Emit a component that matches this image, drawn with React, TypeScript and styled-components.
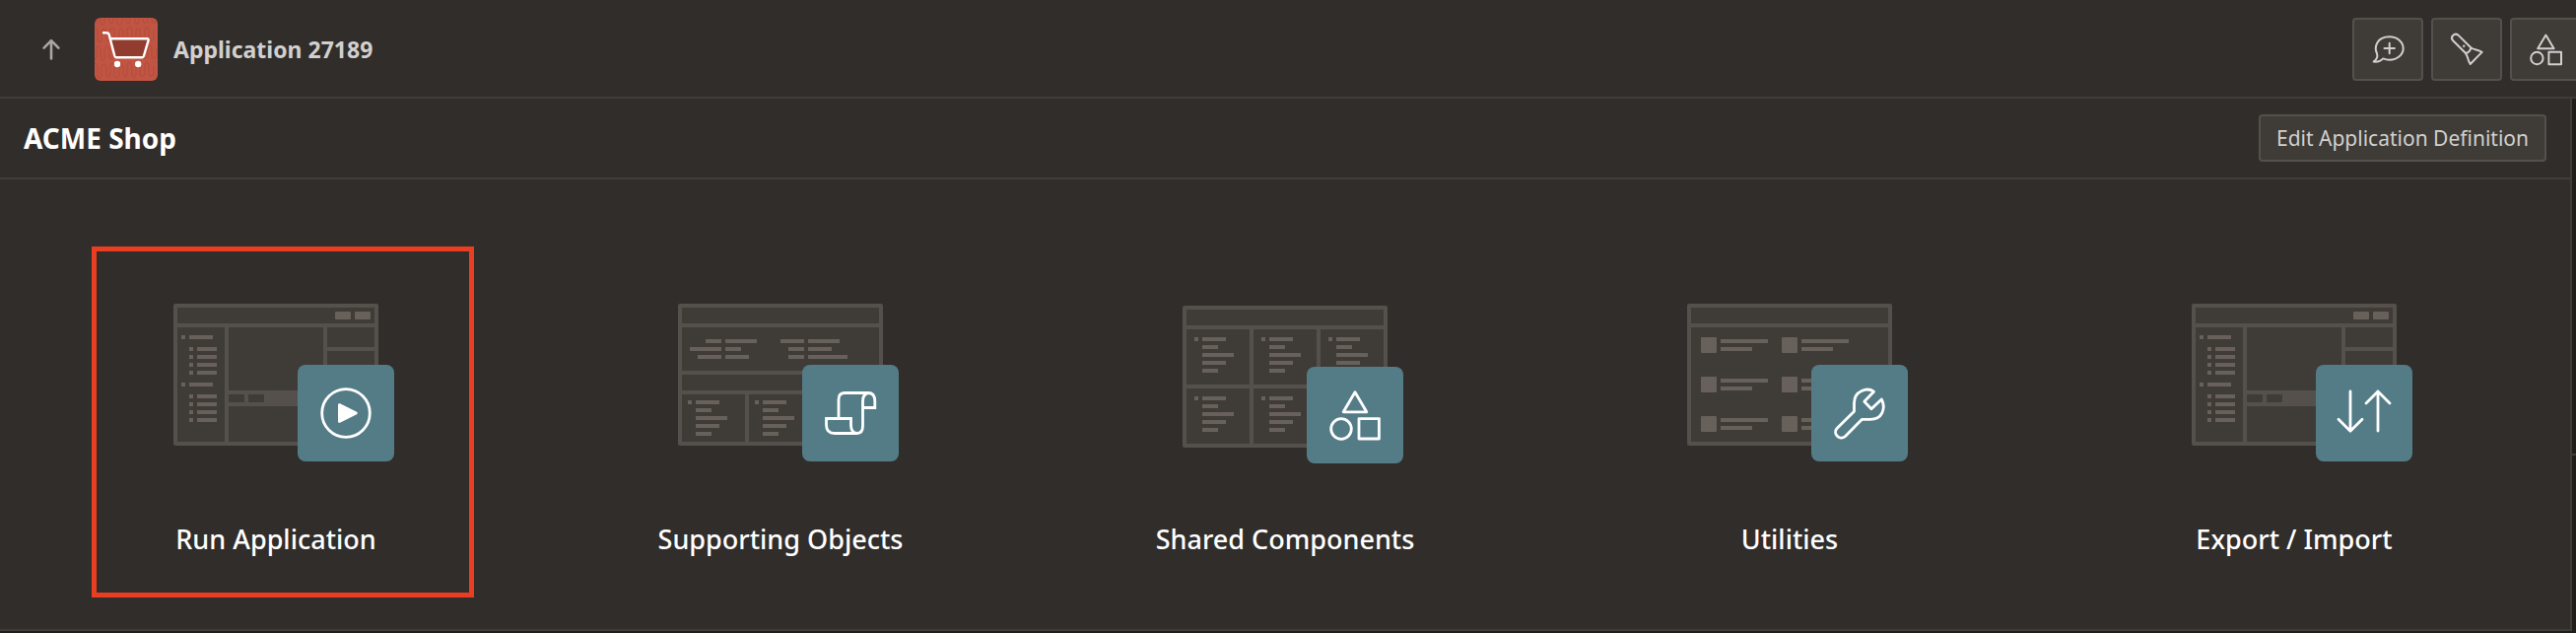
import React from 'react';
import styled, { createGlobalStyle } from 'styled-components';

const color = {
  surface: '#312d2a',
  backdrop: '#201e1c',
  divider: '#403c38',
  control: '#3f3b37',
  controlBorder: '#55504b',
  bar: '#67605b',
  text: '#d1d0ce',
  teal: '#547c87',
};

const GlobalStyle = createGlobalStyle`
  *, *::before, *::after { box-sizing: border-box; }
  body {
    margin: 0;
    background: ${color.backdrop};
    color: #fff;
    font-family: "Noto Sans", "Open Sans", sans-serif;
  }
`;

const Page = styled.div`
  min-height: 100vh;
  overflow: hidden;
`;

const Header = styled.header`
  display: flex;
  align-items: center;
  padding: 16px 0 16px 40px;
  border-top: 2px solid ${color.surface};
  border-bottom: 2px solid ${color.divider};
  background: ${color.surface};
`;

const UpLink = styled.a`
  display: block;
  width: 24px;
  height: 24px;
  margin-right: 32px;
  color: #a9a7a4;
`;

const AppName = styled.span`
  margin-left: 16px;
  color: ${color.text};
  font-size: 23px;
  font-weight: 700;
  line-height: 32px;
`;

const Toolbar = styled.nav`
  display: flex;
  gap: 8px;
  margin-left: auto;
  margin-right: -5px;
`;

const ToolButton = styled.button`
  display: flex;
  align-items: center;
  justify-content: center;
  width: 72px;
  height: 64px;
  padding: 0;
  border: 2px solid ${color.controlBorder};
  border-radius: 4px;
  background: ${color.control};
  color: ${color.text};
`;

const Workspace = styled.div`
  display: grid;
  grid-template-columns: 1fr 4px;
`;

const Main = styled.main`
  border-right: 2px solid ${color.divider};
  border-bottom: 2px solid ${color.divider};
  background: ${color.surface};
`;

const SidePanel = styled.aside`
  background: ${color.backdrop};
`;

const SideSection = styled.div`
  height: 362px;
  border-bottom: 2px solid ${color.divider};
`;

const TitleBar = styled.div`
  display: flex;
  align-items: center;
  justify-content: space-between;
  padding: 16px 24px;
  border-bottom: 2px solid ${color.divider};
`;

const Title = styled.h1`
  margin: 0;
  font-size: 28px;
  font-weight: 700;
  line-height: 40px;
`;

const EditButton = styled.button`
  height: 48px;
  padding: 0 16px;
  border: 2px solid ${color.controlBorder};
  border-radius: 4px;
  background: ${color.control};
  color: ${color.text};
  font-family: inherit;
  font-size: 21px;
  line-height: 32px;
`;

const CardList = styled.ul`
  display: grid;
  grid-template-columns: repeat(5, 1fr);
  margin: 0;
  padding: 64px 24px 32px;
  list-style: none;
`;

const CardItem = styled.li`
  position: relative;
`;

const CardLink = styled.a`
  display: flex;
  flex-direction: column;
  align-items: center;
  gap: 45px;
  padding: 46px 0 41px;
  color: #fff;
  text-decoration: none;
`;

const CardLabel = styled.span`
  font-size: 27px;
  font-weight: 500;
  line-height: 36px;
`;

const Highlight = styled.div`
  position: absolute;
  top: 4px;
  bottom: 0;
  left: 69px;
  width: 388px;
  border: 5px solid #ea3e23;
  pointer-events: none;
`;

const Glyph = styled.svg`
  display: block;
  overflow: visible;
  fill: none;
  stroke: currentColor;
  stroke-width: 2;
  stroke-linecap: round;
  stroke-linejoin: round;
`;

const AppIconSvg = styled.svg`
  display: block;
  border-radius: 6px;
`;

type RectSpec = [x: number, y: number, width: number, height: number];

const Rects = ({ items, fill, rx = 0 }: { items: RectSpec[]; fill: string; rx?: number }) => (
  <g fill={fill}>
    {items.map(([x, y, w, h]) => (
      <rect key={`${x}-${y}`} x={x} y={y} width={w} height={h} rx={rx} />
    ))}
  </g>
);

const textBlock = (x: number, y: number): RectSpec[] => [
  [x, y, 4, 4],
  ...[24, 16, 32, 24, 16].map((w, i): RectSpec => [x + 8, y + i * 8, w, 4]),
];

const treeBlock = (y: number): RectSpec[] => [
  [8, y, 4, 4],
  [16, y, 24, 4],
  ...[12, 20, 28, 36].flatMap((d): RectSpec[] => [
    [16, y + d, 4, 4],
    [24, y + d, 20, 4],
  ]),
];

const BuilderWireframe = () => (
  <>
    <Rects
      fill={color.controlBorder}
      items={[[52, 24, 4, 116], [152, 24, 4, 116], [156, 44, 48, 4], [56, 88, 96, 16]]}
    />
    <Rects fill={color.control} rx={1} items={[[56, 92, 16, 8], [76, 92, 16, 8]]} />
    <Rects fill={color.bar} rx={1} items={[[164, 8, 16, 8], [184, 8, 16, 8]]} />
    <Rects fill={color.bar} items={[...treeBlock(32), ...treeBlock(80)]} />
  </>
);

const ObjectsWireframe = () => (
  <>
    <Rects
      fill={color.controlBorder}
      items={[[4, 68, 200, 4], [4, 88, 200, 4], [68, 92, 4, 48], [136, 92, 4, 48]]}
    />
    <Rects
      fill={color.bar}
      items={[
        [28, 36, 16, 4], [48, 36, 32, 4], [104, 36, 24, 4], [132, 36, 32, 4],
        [12, 44, 32, 4], [48, 44, 16, 4], [112, 44, 16, 4], [132, 44, 24, 4],
        [20, 52, 24, 4], [48, 52, 24, 4], [112, 52, 16, 4], [132, 52, 40, 4],
        ...textBlock(10, 98), ...textBlock(78, 98),
      ]}
    />
  </>
);

const ComponentsWireframe = () => (
  <>
    <Rects
      fill={color.controlBorder}
      items={[[68, 24, 4, 116], [136, 24, 4, 116], [4, 80, 200, 4]]}
    />
    <Rects
      fill={color.bar}
      items={[32, 92].flatMap((y) => [12, 80, 148].flatMap((x) => textBlock(x, y)))}
    />
  </>
);

const UtilitiesWireframe = () => {
  const cells = [34, 74, 114].flatMap((y) => [14, 96].map((x) => [x, y]));
  return (
    <>
      <Rects fill={color.bar} rx={1} items={cells.map(([x, y]): RectSpec => [x, y, 16, 16])} />
      <Rects
        fill={color.bar}
        items={cells.flatMap(([x, y]): RectSpec[] => [
          [x + 20, y + 2, 48, 4],
          [x + 20, y + 10, 32, 4],
        ])}
      />
    </>
  );
};

const PlayMark = () => (
  <>
    <circle cx="49" cy="49" r="24.3" />
    <path d="M42.4 40.6 59.4 49 42.4 57.4Z" fill="#fff" />
  </>
);

const ScrollMark = () => (
  <path
    strokeLinecap="butt"
    strokeLinejoin="miter"
    d="M37 54V35Q37 28.5 43.5 28.5H67Q73.8 28.5 73.8 37V43.5H62M68 28.5Q61.5 29 61.5 37V62Q61.5 69.5 55.5 69.5Q49.5 69 49.5 61V54.5H24.5V61Q24.5 69.5 33 69.5H56"
  />
);

const ShapesMark = () => (
  <>
    <path d="M49 25.8 60.8 45.8H37.2Z" />
    <circle cx="35" cy="63" r="10.3" />
    <rect x="53" y="52.6" width="20.4" height="20.4" />
  </>
);

const WrenchMark = () => (
  <path d="M63.5 27.2C57 22.5 43.5 26 43.5 39V47.3L26 64.5C21.5 69.5 28.5 77.5 34.5 72.5L51.5 55.3H60C72 55.3 76 44 71.3 35L61 44.8 53.8 37.2Z" />
);

const TransferMark = () => (
  <path d="M35 27V67M23 55.3 35 67.3 47 55.3M63 67V27M51 39 63 27 75 39" />
);

interface IllustrationProps {
  wireframe: React.ReactNode;
  mark: React.ReactNode;
  top?: number;
}

const Illustration = ({ wireframe, mark, top = 16 }: IllustrationProps) => (
  <svg width="256" height="192" viewBox="0 0 256 192" aria-hidden="true">
    <g transform={`translate(24 ${top})`}>
      <rect width="208" height="144" rx="2" fill={color.controlBorder} />
      <rect x="4" y="4" width="200" height="136" fill={color.control} />
      <rect x="4" y="20" width="200" height="4" fill={color.controlBorder} />
      {wireframe}
      <g transform="translate(126 62)">
        <rect width="98" height="98" rx="8" fill={color.teal} />
        <g fill="none" stroke="#fff" strokeWidth="2.8" strokeLinecap="round" strokeLinejoin="round">
          {mark}
        </g>
      </g>
    </g>
  </svg>
);

const waveRows = [-6, 12, 30, 48];

const AppIcon = () => (
  <AppIconSvg width="64" height="64" viewBox="0 0 64 64" role="img" aria-label="Shop">
    <rect width="64" height="64" fill="#c15543" />
    <g fill="none" stroke="#b54d3c" strokeWidth="1.2">
      {waveRows.map((y, i) => (
        <path
          key={y}
          d={`M${-2 - (i % 2) * 3} ${y}v9q2 6 4 0v-8q2-5 4 0v10q2 5 4 0v-9q2-6 5 0v7q2 6 4 0v-9q2-4 4 0v11q2 4 5 0v-10q2-5 4 0v8q2 6 4 0v-9q2-5 5 0v10q2 5 4 0v-9q2-5 4 0v8q2 5 5 0v-9q2-5 4 0v9q2 5 5 0v-8`}
        />
      ))}
    </g>
    <path d="M16.5 21.5H54.7L49.8 40.3H20.8Z" fill="#913c2e" />
    <path
      d="M9 15.3H12Q14.2 15.3 14.8 17.5L20.4 39Q20.8 40.3 22 40.3H48.2Q49.4 40.3 49.8 39L54.6 22.8Q54.9 21.3 53.4 21.3H16"
      fill="none"
      stroke="#fff"
      strokeWidth="2.4"
      strokeLinecap="round"
      strokeLinejoin="round"
    />
    <circle cx="23" cy="47" r="3.2" fill="#fff" />
    <circle cx="44.2" cy="47" r="3.2" fill="#fff" />
  </AppIconSvg>
);

const FeedbackIcon = () => (
  <Glyph width="32" height="32" viewBox="0 0 32 32">
    <path d="M5 20.2C2 14 4.5 3.3 17.7 3.3C25.5 3.3 31.7 8.5 31.7 15C31.7 21.5 25.5 26.7 17.7 26.7C15.5 26.7 13.2 26.2 11.3 25.4C9 27.9 5.5 29 1.6 28.6C4.5 26.5 6.2 24 5 20.2Z" />
    <path d="M17.7 9.8V20.2M12.5 15H22.9" />
  </Glyph>
);

const FlashlightIcon = () => (
  <Glyph width="32" height="32" viewBox="0 0 32 32">
    <path d="M14.8 19.8 2 7C-1 3.5 3.5-1.2 7.5 1.6L20.3 14.2Q20.3 16.5 18.2 18.4 16.5 20 14.8 19.8ZM20.3 14.2C23.5 16.8 27.5 16.2 31.6 18.9L19.7 31C17 27 17.4 23 14.8 19.8" />
    <circle cx="13.2" cy="12.8" r="1.2" fill="currentColor" stroke="none" />
  </Glyph>
);

const SharedIcon = () => (
  <Glyph width="32" height="32" viewBox="0 0 32 32">
    <path d="M16.4 1.6 24.6 15.2H8.2Z" />
    <circle cx="7.4" cy="25" r="6.2" />
    <rect x="19.4" y="18.8" width="12.6" height="12.4" />
  </Glyph>
);

const tools = [
  { label: 'Comments', icon: <FeedbackIcon /> },
  { label: 'Search', icon: <FlashlightIcon /> },
  { label: 'Shared Components', icon: <SharedIcon /> },
];

const cards = [
  { label: 'Run Application', wireframe: <BuilderWireframe />, mark: <PlayMark />, highlighted: true },
  { label: 'Supporting Objects', wireframe: <ObjectsWireframe />, mark: <ScrollMark /> },
  { label: 'Shared Components', wireframe: <ComponentsWireframe />, mark: <ShapesMark />, top: 18 },
  { label: 'Utilities', wireframe: <UtilitiesWireframe />, mark: <WrenchMark /> },
  { label: 'Export / Import', wireframe: <BuilderWireframe />, mark: <TransferMark /> },
];

export default function App() {
  return (
    <Page>
      <GlobalStyle />
      <Header>
        <UpLink href="#" aria-label="Up">
          <Glyph width="24" height="24" viewBox="0 0 24 24">
            <path strokeWidth="2.6" d="M12 21.5V3.5M4.6 10.6 12 3.2 19.4 10.6" />
          </Glyph>
        </UpLink>
        <AppIcon />
        <AppName>Application 27189</AppName>
        <Toolbar aria-label="Application tools">
          {tools.map((tool) => (
            <ToolButton key={tool.label} type="button" aria-label={tool.label}>
              {tool.icon}
            </ToolButton>
          ))}
        </Toolbar>
      </Header>
      <Workspace>
        <Main>
          <TitleBar>
            <Title>ACME Shop</Title>
            <EditButton type="button">Edit Application Definition</EditButton>
          </TitleBar>
          <CardList>
            {cards.map((card) => (
              <CardItem key={card.label}>
                <CardLink href="#">
                  <Illustration wireframe={card.wireframe} mark={card.mark} top={card.top} />
                  <CardLabel>{card.label}</CardLabel>
                </CardLink>
                {card.highlighted && <Highlight />}
              </CardItem>
            ))}
          </CardList>
        </Main>
        <SidePanel>
          <SideSection />
        </SidePanel>
      </Workspace>
    </Page>
  );
}
